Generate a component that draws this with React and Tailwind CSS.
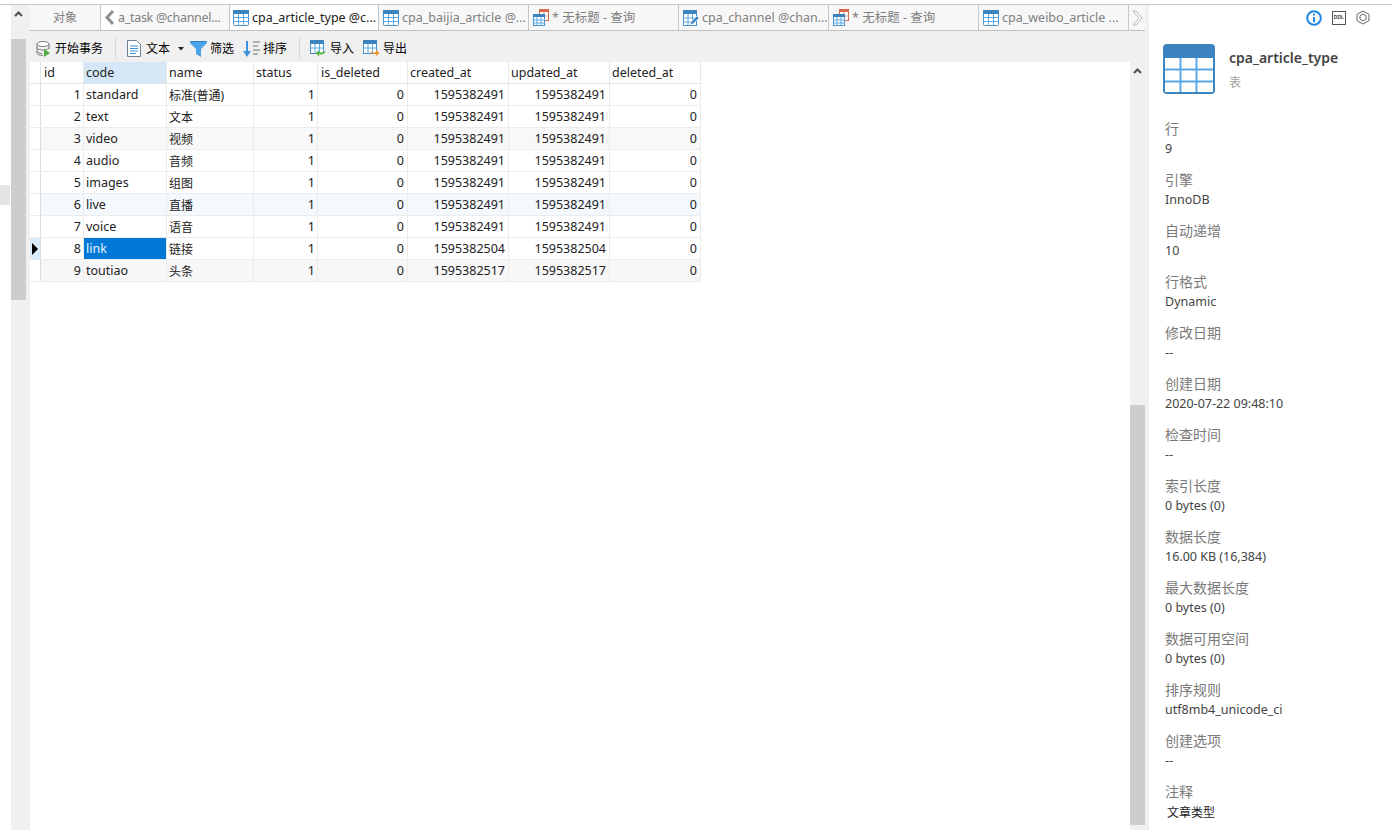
import React from "react";

const TableIcon = ({ s = 16 }) => (
  <svg width={s} height={s} viewBox="0 0 16 16" className="shrink-0">
    <rect x="0.5" y="0.5" width="15" height="15" rx="1" fill="#fff" stroke="#4a90cf" />
    <rect x="0" y="0" width="16" height="4" fill="#3b84c0" />
    <path d="M5.5 4v12M10.5 4v12M0 7.5h16M0 11.5h16" stroke="#5aa9e6" strokeWidth="1" />
  </svg>
);

const QueryIcon = () => (
  <svg width="16" height="17" viewBox="0 0 16 17" className="shrink-0">
    <rect x="6.500" y="0.500" width="9" height="11" fill="#fff" stroke="#d9674a" />
    <rect x="6" y="0" width="10" height="3" fill="#d9674a" />
    <path d="M11 3v9M6 7h10" stroke="#e89a85" />
    <rect x="0.5" y="5.5" width="11" height="11" fill="#fff" stroke="#4a90cf" />
    <rect x="0" y="5" width="12" height="3" fill="#3b84c0" />
    <path d="M4 8v9M8 8v9M0 11h12M0 14h12" stroke="#5aa9e6" />
  </svg>
);

const EditIcon = () => (
  <svg width="16" height="16" viewBox="0 0 16 16" className="shrink-0">
    <rect x="0.5" y="0.5" width="13" height="15" fill="#fff" stroke="#4a90cf" />
    <rect x="0" y="0" width="14" height="4" fill="#3b84c0" />
    <path d="M5 4v12M9.5 4v8M0 8h13M0 12h8" stroke="#5aa9e6" />
    <path d="M7 15l1-3 6-6 2 2-6 6z" fill="#3b84c0" stroke="#fff" strokeWidth="0.6" />
  </svg>
);

const Tab = ({ icon, text, active }) => (
  <div
    className={`w-[150px] h-full flex items-center shrink-0 ${
      active
        ? "pl-[3px] bg-white text-[#222] border-x border-[#c4c4c4] -mb-px h-[26px] relative"
        : "pl-[4px] text-[#808080] border-r border-[#c8c8c8]"
    }`}
  >
    {icon}
    <span className="ml-[3px] pt-[1px] whitespace-nowrap text-[12.5px] leading-none">{text}</span>
  </div>
);

const ToolText = ({ children }) => (
  <span className="text-[12px] text-black leading-none whitespace-nowrap">{children}</span>
);

const Sep = ({ cls }) => <div className={`w-px h-[22px] bg-[#d8d8d8] ${cls}`} />;

const ImpIcon = ({ out }) => (
  <svg width="17" height="17" viewBox="0 0 17 17" className="shrink-0">
    <rect x="0.5" y="0.5" width="13" height="13" fill="#fff" stroke="#4a90cf" />
    <rect x="0" y="0" width="14" height="4" fill="#3b84c0" />
    <path d="M5 4v9M9.5 4v9M0 8h13" stroke="#5aa9e6" />
    <path
      d={out ? "M6 10c2 3 5 3 7 2v-2l3.500 3-3.500 3v-2c-3 .5-6-1-7-4z" : "M16 11c-1 3-4 4-7 3.500v2L5.500 13 9 10v2c2 .5 5 .5 7-1z"}
      fill={out ? "#f0921e" : "#5db844"}
    />
  </svg>
);

const cols = "grid-cols-[11px_43px_83px_87px_64px_90px_101px_101px_91px]";
const headers = ["id", "code", "name", "status", "is_deleted", "created_at", "updated_at", "deleted_at"];
const rows = [
  [1, "standard", "标准(普通)", 1, 0, 1595382491, 1595382491, 0],
  [2, "text", "文本", 1, 0, 1595382491, 1595382491, 0],
  [3, "video", "视频", 1, 0, 1595382491, 1595382491, 0],
  [4, "audio", "音频", 1, 0, 1595382491, 1595382491, 0],
  [5, "images", "组图", 1, 0, 1595382491, 1595382491, 0],
  [6, "live", "直播", 1, 0, 1595382491, 1595382491, 0],
  [7, "voice", "语音", 1, 0, 1595382491, 1595382491, 0],
  [8, "link", "链接", 1, 0, 1595382504, 1595382504, 0],
  [9, "toutiao", "头条", 1, 0, 1595382517, 1595382517, 0],
];
const rowBg = ["bg-white", "bg-white", "bg-[#f8f8f8]", "bg-white", "bg-white", "bg-[#f4f9fd]", "bg-white", "bg-white", "bg-[#f7f7f7]"];

const fields = [
  ["行", "9"],
  ["引擎", "InnoDB"],
  ["自动递增", "10"],
  ["行格式", "Dynamic"],
  ["修改日期", "--"],
  ["创建日期", "2020-07-22 09:48:10"],
  ["检查时间", "--"],
  ["索引长度", "0 bytes (0)"],
  ["数据长度", "16.00 KB (16,384)"],
  ["最大数据长度", "0 bytes (0)"],
  ["数据可用空间", "0 bytes (0)"],
  ["排序规则", "utf8mb4_unicode_ci"],
  ["创建选项", "--"],
];

const Chevron = ({ cls }) => (
  <svg width="9" height="6" viewBox="0 0 9 6" className={cls}>
    <path d="M1 5l3.500-3.500L8 5" fill="none" stroke="#505050" strokeWidth="2" />
  </svg>
);

export default function App() {
  return (
    <div className="w-[1392px] h-[830px] overflow-hidden bg-white flex flex-col pt-[4px] font-['Noto_Sans','Noto_Sans_CJK_SC',sans-serif] text-[13px]">
      <div className="flex flex-1 min-h-0 border-t border-[#c8c8c8]">
        {/* left gutter */}
        <div className="w-[11px] shrink-0">
          <div className="w-[10px] h-[20px] bg-[#e4e4e4] mt-[180px]" />
        </div>
        {/* left scrollbar */}
        <div className="w-[19px] shrink-0 bg-[#f0f0f0] flex flex-col">
          <div className="w-[15px] h-[34px] pt-[6px] flex justify-center items-start">
            <Chevron />
          </div>
          <div className="w-[15px] h-[261px] bg-[#cdcdcd]" />
        </div>

        {/* main */}
        <div className="w-[1119px] shrink-0 bg-[#f0f0f0] flex flex-col">
          <div className="w-[1115px] h-[26px] bg-[#f7f7f7] border-b border-[#c0c0c0] flex shrink-0">
            <div className="w-[71px] h-full border-r border-[#c8c8c8] flex items-center justify-center text-[12px] text-[#808080] shrink-0">
              对象
            </div>
            <div className="w-[18px] h-full bg-white flex items-center justify-center shrink-0">
              <svg width="12" height="15" viewBox="0 0 12 15">
                <path d="M9 1L3 7.500 9 14" fill="none" stroke="#909090" strokeWidth="3" />
              </svg>
            </div>
            <div className="w-[110px] h-full -ml-[1px] mr-[1px] pt-[1px] flex items-center shrink-0 text-[#808080] text-[12.5px] tracking-[-0.3px] whitespace-nowrap">
              a_task @channel...
            </div>
            <Tab active icon={<TableIcon />} text="cpa_article_type @c..." />
            <Tab icon={<TableIcon />} text="cpa_baijia_article @..." />
            <Tab icon={<QueryIcon />} text="* 无标题 - 查询" />
            <Tab icon={<EditIcon />} text="cpa_channel @chan..." />
            <Tab icon={<QueryIcon />} text="* 无标题 - 查询" />
            <Tab icon={<TableIcon />} text="cpa_weibo_article ..." />
            <div className="flex-1 flex items-center justify-center">
              <svg width="11" height="16" viewBox="0 0 11 16">
                <path d="M1 1h3l6 7-6 7H1l6-7z" fill="#fff" stroke="#b4b4b4" strokeWidth="1" />
              </svg>
            </div>
          </div>

          <div className="h-[31px] shrink-0 flex items-center pl-[6px] pt-[4px]">
            <svg width="15" height="16" viewBox="0 0 15 16" className="shrink-0">
              <ellipse cx="7" cy="3" rx="6" ry="2.500" fill="#fff" stroke="#7c7c7c" />
              <path d="M1 3v9c0 1.500 3 2.500 6 2.500M13 3v5M1 6.500c0 1.500 3 2.500 6 2.500s6-1 6-2.500M1 10c0 1.500 3 2.500 5 2.500" fill="none" stroke="#7c7c7c" />
              <path d="M8 8l6 4-6 4z" fill="#4cae3f" />
            </svg>
            <span className="ml-[4px]"><ToolText>开始事务</ToolText></span>
            <Sep cls="ml-[12px]" />
            <svg width="14" height="17" viewBox="0 0 14 17" className="ml-[11px] shrink-0">
              <path d="M.5.5h9l4 4v12H.500z" fill="#fff" stroke="#6f7f8f" />
              <path d="M3 6h8M3 8.500h8M3 11h8M3 13.500h6" stroke="#3b93dc" />
            </svg>
            <span className="ml-[5px]"><ToolText>文本</ToolText></span>
            <svg width="6" height="4" viewBox="0 0 6 4" className="ml-[8px] shrink-0">
              <path d="M0 0h6L3 3.500z" fill="#222" />
            </svg>
            <svg width="17" height="17" viewBox="0 0 17 17" className="ml-[6px] shrink-0">
              <path d="M0 1h17v2l-6 6v8l-5-3V9L0 3z" fill="#4da3e8" />
              <path d="M1 1.500h15" stroke="#2e7fc0" />
            </svg>
            <span className="ml-[3px]"><ToolText>筛选</ToolText></span>
            <svg width="17" height="17" viewBox="0 0 17 17" className="ml-[9px] shrink-0">
              <path d="M4 1v12" stroke="#3d93de" strokeWidth="2" />
              <path d="M0 11h8l-4 6z" fill="#3d93de" />
              <path d="M10 2h7M10 6h5M10 10h7M10 14h5" stroke="#707070" />
            </svg>
            <span className="ml-[3px]"><ToolText>排序</ToolText></span>
            <Sep cls="ml-[12px]" />
            <div className="ml-[10px] flex items-center shrink-0"><ImpIcon /></div>
            <span className="ml-[3px]"><ToolText>导入</ToolText></span>
            <div className="ml-[9px] flex items-center shrink-0"><ImpIcon out /></div>
            <span className="ml-[3px]"><ToolText>导出</ToolText></span>
          </div>

          <div className="flex-1 min-h-0 flex">
            <div className="w-[1100px] bg-white shrink-0">
              <div className={`grid ${cols} w-[671px] h-[22px] border-b border-[#e4e4e4]`}>
                <div className="border-r border-[#e4e4e4]" />
                {headers.map((h, i) => (
                  <div
                    key={h}
                    className={`border-r border-[#e8e8e8] pt-[2px] flex items-center text-[12.5px] text-[#222] ${
                      i === 0 || i === 4 ? "pl-[3px]" : "pl-[2px]"
                    } ${i === 1 ? "bg-[#d5e7f6]" : "bg-white"}`}
                  >
                    {h}
                  </div>
                ))}
              </div>
              {rows.map((r, ri) => (
                <div key={ri} className={`grid ${cols} w-[671px] h-[22px] border-b border-[#ececec] ${rowBg[ri]}`}>
                  <div className={`border-r border-[#dcdcdc] flex items-center justify-center ${ri === 7 ? "bg-[#d9ebf9]" : "bg-white"}`}>
                    {ri === 7 && (
                      <svg width="6" height="12" viewBox="0 0 6 12">
                        <path d="M0 0l6 6-6 6z" fill="#000" />
                      </svg>
                    )}
                  </div>
                  {r.map((c, ci) => {
                    const left = ci === 1 || ci === 2;
                    const sel = ri === 7 && ci === 1;
                    return (
                      <div
                        key={ci}
                        className={`border-r border-[#ececec] pt-[2px] flex items-center whitespace-nowrap ${
                          ci === 2 ? "text-[12px]" : "text-[12.5px]"
                        } ${left ? "pl-[2px]" : ci >= 4 ? "justify-end pr-[3px]" : "justify-end pr-[2px]"} ${
                          sel ? "bg-[#0078d7] text-[#e8f2fb]" : "text-[#222]"
                        }`}
                      >
                        {c}
                      </div>
                    );
                  })}
                </div>
              ))}
            </div>
            <div className="w-[15px] shrink-0 flex flex-col">
              <div className="h-[343px] pt-[6px] flex justify-center items-start shrink-0">
                <Chevron />
              </div>
              <div className="h-[420px] bg-[#cdcdcd] shrink-0" />
            </div>
          </div>
        </div>

        {/* right panel */}
        <div className="flex-1 min-w-0 flex flex-col pl-[16px] bg-white">
          <div className="h-[24px] flex items-center shrink-0 pt-[1px] pl-[141px]">
            <svg width="16" height="16" viewBox="0 0 16 16" className="shrink-0">
              <circle cx="8" cy="8" r="6.800" fill="#fff" stroke="#1e88e5" strokeWidth="2" />
              <path d="M8 7v5" stroke="#1e88e5" strokeWidth="2" />
              <circle cx="8" cy="4.600" r="1.100" fill="#1e88e5" />
            </svg>
            <div className="ml-[10px] w-[14px] h-[14px] border border-[#555] flex items-center justify-center shrink-0">
              <span className="text-[5px] font-bold leading-none text-[#444] font-['Liberation_Sans',sans-serif]">DDL</span>
            </div>
            <svg width="14" height="15" viewBox="0 0 14 15" className="ml-[10px] shrink-0">
              <path d="M7 1l6 3.300v6.400L7 14l-6-3.300V4.300z" fill="none" stroke="#666" />
              <path d="M7 4l3 1.700v3.600L7 11 4 9.300V5.700z" fill="none" stroke="#666" />
            </svg>
          </div>
          <div className="flex items-start mt-[15px] shrink-0">
            <svg width="52" height="50" viewBox="0 0 52 50" className="ml-[-2px] shrink-0">
              <rect x="0" y="0" width="52" height="50" rx="4" fill="#3b84c0" />
              <rect x="2" y="14" width="48" height="34" fill="#fff" />
              <path d="M17.500 14v34M33.500 14v34M2 25.500h48M2 37.500h48" stroke="#5aa9e6" strokeWidth="2" />
            </svg>
            <div className="ml-[14px] flex flex-col">
              <div className="mt-[5px] h-[18px] text-[14px] leading-[18px] font-semibold text-[#444] whitespace-nowrap">cpa_article_type</div>
              <div className="mt-[8px] text-[12px] leading-[16px] text-[#a0a0a0]">表</div>
            </div>
          </div>
          <div className="flex flex-col mt-[24px]">
            {fields.map(([k, v]) => (
              <div key={k} className="h-[51px] shrink-0">
                <div className="h-[20px] flex items-center text-[14px] text-[#7a7a7a] whitespace-nowrap">{k}</div>
                <div className="h-[22px] flex items-center text-[12.500px] text-[#444] whitespace-nowrap">{v}</div>
              </div>
            ))}
            <div className="h-[20px] flex items-center text-[14px] text-[#7a7a7a]">注释</div>
            <div className="h-[24px] flex items-center text-[12px] text-[#222] pl-[2px]">文章类型</div>
          </div>
        </div>
      </div>
    </div>
  );
}
